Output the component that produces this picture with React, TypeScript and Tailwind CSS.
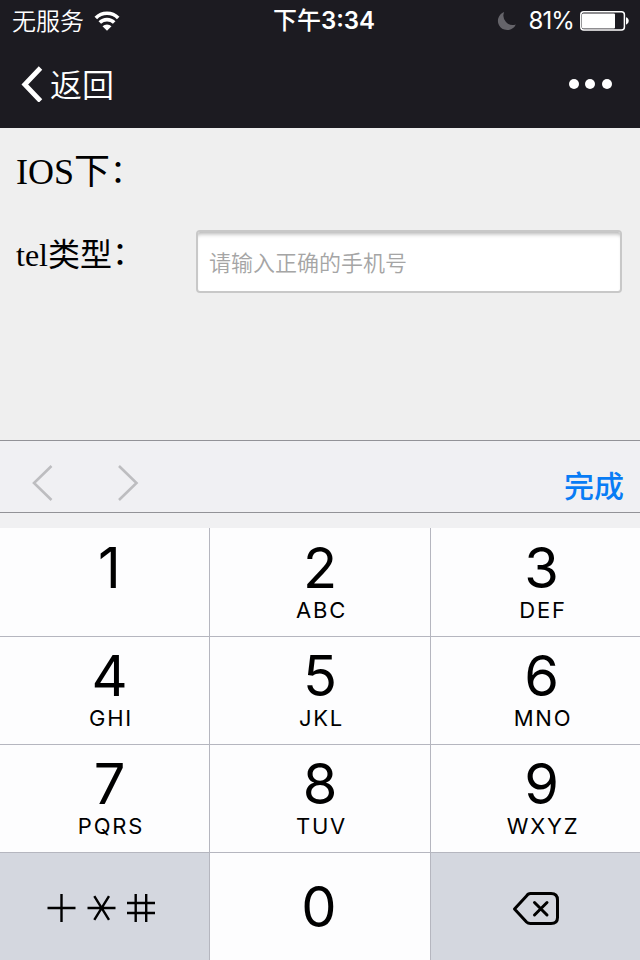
import React from "react";

const keys = [
  ["1", ""],
  ["2", "ABC"],
  ["3", "DEF"],
  ["4", "GHI"],
  ["5", "JKL"],
  ["6", "MNO"],
  ["7", "PQRS"],
  ["8", "TUV"],
  ["9", "WXYZ"],
];

function StatusBar() {
  return (
    <div className="grid h-[41px] grid-cols-[1fr_auto_1fr] items-center text-[24px] leading-[41px]">
      <div className="flex items-center pl-3">
        <span className="pb-[2px] font-['Noto_Sans_CJK_SC',sans-serif] leading-[39px] font-[350]">无服务</span>
        <svg className="ml-[9px] h-[20px] w-[28px]" viewBox="0 0 28 20" fill="none" stroke="white" strokeWidth="3.6">
          <path d="M2.8 7a15.6 15.6 0 0 1 22.4 0" />
          <path d="M6.8 11.6a10.2 10.2 0 0 1 14.4 0" />
          <path d="M14 19.8l-4.5-4.5a6.3 6.3 0 0 1 9 0z" fill="white" stroke="none" />
        </svg>
      </div>
      <div className="pl-2 font-semibold">
        <span className="font-medium">下午</span>3:34
      </div>
      <div className="flex items-center justify-end pr-[11px]">
        <svg className="mr-3 h-[20px] w-[20px]" viewBox="0 0 20 20" fill="#65646a">
          <path d="M7.2 1A9.3 9.3 0 1 0 18.8 13.4A9.3 9.3 0 0 1 7.2 1z" />
        </svg>
        <span className="mr-[6px] tracking-[-0.9px]">81%</span>
        <svg className="h-[20px] w-[49px]" viewBox="0 0 49 20">
          <rect x="0.8" y="0.8" width="43.6" height="18.2" rx="3" fill="none" stroke="white" strokeWidth="1.5" />
          <rect x="2" y="2.5" width="33" height="15" rx="1" fill="white" />
          <path d="M46 6.2a4 4 0 0 1 0 7.6z" fill="white" />
        </svg>
      </div>
    </div>
  );
}

function NavBar() {
  return (
    <div className="flex h-[86px] items-center justify-between pr-7 pl-5">
      <div className="flex items-center">
        <svg className="h-[36px] w-[24px]" viewBox="0 0 24 36" fill="none" stroke="white" strokeWidth="4.8">
          <path d="M20.5 2L4.8 18.5L20.5 35" />
        </svg>
        <span className="ml-[6px] pb-[2px] font-['Noto_Sans_CJK_SC',sans-serif] text-[32px] leading-[44px] font-[350]">返回</span>
      </div>
      <svg className="h-[10px] w-[44px]" viewBox="0 0 44 10" fill="white">
        <circle cx="6" cy="5" r="5" />
        <circle cx="22" cy="5" r="5" />
        <circle cx="39" cy="5" r="5" />
      </svg>
    </div>
  );
}

function Key({ digit, letters, index }: { digit: string; letters: string; index: number }) {
  const column = index % 3;
  const side =
    column === 0 ? "pl-[10px]" : column === 1 ? "border-x border-[#b5b6bf]" : "pl-3";
  const top = index < 3 ? "pt-[12px]" : "border-t border-t-[#b5b6bf] pt-[11px]";
  return (
    <div className={`flex h-[108px] flex-col items-center bg-[#fdfdfe] ${side} ${top}`}>
      <span className="text-[56px] leading-[56px]">{digit}</span>
      {letters && (
        <span className="mt-[3px] pl-[3px] text-[22px] leading-[22px] tracking-[1.8px]">{letters}</span>
      )}
    </div>
  );
}

export default function App() {
  return (
    <div className="flex h-[960px] w-[640px] flex-col overflow-hidden bg-[#efefef] font-[Inter,'Noto_Sans_CJK_SC',sans-serif] text-black">
      <header className="h-32 bg-[#1c1b21] text-white">
        <StatusBar />
        <NavBar />
      </header>
      <main className="h-[312px] px-4 font-['Liberation_Serif','Noto_Sans_CJK_SC',serif]">
        <h1 className="h-[70px] pt-[18px] text-[36px] leading-[52px]">
          IOS下<span className="relative -top-[2px] text-[32px]">：</span>
        </h1>
        <div className="mt-8 flex">
          <label className="mt-[2px] w-[180px] text-[32px] leading-[46px]">
            tel类型<span className="relative -top-[2px]">：</span>
          </label>
          <input
            type="tel"
            placeholder="请输入正确的手机号"
            className="h-[63px] w-[426px] rounded border-2 border-[#c8c8c8] bg-white px-[11px] pb-[2px] font-['Noto_Sans_CJK_SC',sans-serif] text-[22px] font-[350] shadow-[inset_0_5px_4px_-3px_#b4b4b4] placeholder:text-[#a5a5a5]"
          />
        </div>
      </main>
      <div className="flex h-[73px] items-center justify-between border-y border-[#929297] bg-[#f0f0f3] pt-[13px] pr-4 pl-[30px]">
        <svg className="h-[40px] w-[110px]" viewBox="0 0 110 40" fill="none" stroke="#bdbdc0" strokeWidth="2.6">
          <path d="M21.5 3L4 20L21.5 37" />
          <path d="M89 3L106.5 20L89 37" />
        </svg>
        <span className="pt-[5px] text-[30px] leading-[40px] font-medium text-[#087cf5]">完成</span>
      </div>
      <div className="h-[15px] shrink-0 bg-[#f0f0f2]" />
      <div className="grid grid-cols-[209px_222px_209px]">
        {keys.map(([digit, letters], i) => (
          <Key key={digit} digit={digit} letters={letters} index={i} />
        ))}
        <div className="flex h-[108px] items-center border-t border-[#b5b6bf] bg-[#d4d7df] pt-[2px] pl-[47px]">
          <svg className="h-[30px] w-[110px]" viewBox="0 0 110 30" fill="none" stroke="black" strokeWidth="2.4">
            <path d="M0.5 15H28.5M14.5 1V29" />
            <path d="M40.5 15H68.5M47.3 3.2L62 26.8M62 3.2L47.3 26.8" />
            <path d="M80 10H108M80 20H108M88.7 1V29M99.2 1V29" />
          </svg>
        </div>
        <div className="flex h-[108px] justify-center border-x border-t border-[#b5b6bf] bg-[#fdfdfe] pt-[26px] pr-[2px]">
          <span className="text-[56px] leading-[56px]">0</span>
        </div>
        <div className="flex h-[108px] items-center border-t border-[#b5b6bf] bg-[#d4d7df] pt-[5px] pl-[81px]">
          <svg className="h-[36px] w-[48px]" viewBox="0 0 48 36" fill="none" stroke="black" strokeWidth="3" strokeLinecap="round" strokeLinejoin="round">
            <path d="M18.5 2.5H39Q45.5 2.5 45.5 9V26.5Q45.5 32.5 39 32.5H18.5Q16 32.5 14.5 31L2.5 18L14.5 5Q16 2.5 18.5 2.5Z" />
            <path d="M22.5 11.5L35 24M35 11.5L22.5 24" strokeWidth="3" />
          </svg>
        </div>
      </div>
    </div>
  );
}
